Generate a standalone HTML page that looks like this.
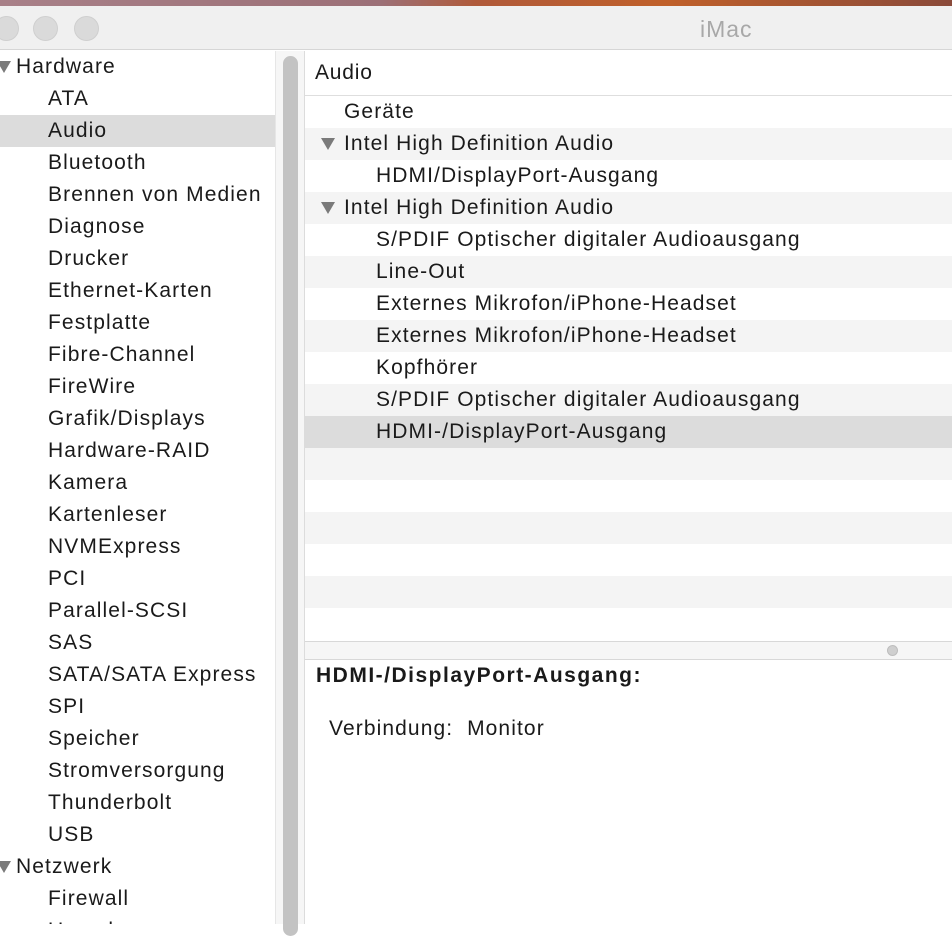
<!DOCTYPE html>
<html><head><meta charset="utf-8"><style>
*{margin:0;padding:0;box-sizing:border-box}
body{width:952px;height:924px;overflow:hidden;background:#fff;font-family:"Liberation Sans",sans-serif;color:#1a1a1a;position:relative}
.top{position:absolute;left:0;top:0;width:952px;height:6px;background:linear-gradient(90deg,#a88088 0%,#9c7077 40%,#b05a3a 50%,#c0602a 70%,#8a4a3a 100%)}
.title{position:absolute;left:0;top:6px;width:952px;height:44px;background:#f0f0f0;border-bottom:1px solid #d6d6d6}
.btn{position:absolute;top:10px;width:25px;height:25px;border-radius:50%;background:#dadada;border:1px solid #cfcfcf}
.ttl{position:absolute;left:700px;top:10px;font-size:23px;color:#a8a8a8;letter-spacing:1px}
.side{position:absolute;left:0;top:51px;width:275px;height:873px;background:#fff;overflow:hidden}
.row{height:32px;line-height:32px;font-size:21px;white-space:nowrap;position:relative;letter-spacing:1.1px}
.side .row{padding-left:48px}
.side .row.h{padding-left:16px}
.sel{background:#dcdcdc}
.tri{position:absolute;width:0;height:0;border-left:7px solid transparent;border-right:7px solid transparent;border-top:12px solid #7a7a7a}
.track{position:absolute;left:275px;top:51px;width:30px;height:873px;background:#f6f6f6;border-left:1px solid #e6e6e6;border-right:1px solid #dcdcdc}
.thumb{position:absolute;left:283px;top:56px;width:15px;height:880px;border-radius:8px;background:#c3c3c3}
.main{position:absolute;left:305px;top:51px;width:647px}
.hdr{height:45px;line-height:44px;padding-left:10px;font-size:21px;border-bottom:1px solid #dedede;letter-spacing:0.8px}
.main .row{padding-left:39px}
.main .row.c{padding-left:71px}
.main .row:nth-child(even){background:#f4f4f4}
.main .row.sel{background:#dcdcdc}
.split{position:absolute;left:305px;top:641px;width:647px;height:19px;background:#f6f6f6;border-top:1px solid #d8d8d8;border-bottom:1px solid #d8d8d8}
.dot{position:absolute;left:582px;top:3px;width:11px;height:11px;border-radius:50%;background:#cfcfcf;border:1px solid #bdbdbd}
</style></head><body>
<div class="top"></div>
<div class="title">
<div class="btn" style="left:-6px"></div><div class="btn" style="left:33px"></div><div class="btn" style="left:74px"></div>
<div class="ttl">iMac</div>
</div>
<div class="side">
<div class="row h"><span class="tri" style="left:-3px;top:10px"></span>Hardware</div>
<div class="row">ATA</div>
<div class="row sel">Audio</div>
<div class="row">Bluetooth</div>
<div class="row">Brennen von Medien</div>
<div class="row">Diagnose</div>
<div class="row">Drucker</div>
<div class="row">Ethernet-Karten</div>
<div class="row">Festplatte</div>
<div class="row">Fibre-Channel</div>
<div class="row">FireWire</div>
<div class="row">Grafik/Displays</div>
<div class="row">Hardware-RAID</div>
<div class="row">Kamera</div>
<div class="row">Kartenleser</div>
<div class="row">NVMExpress</div>
<div class="row">PCI</div>
<div class="row">Parallel-SCSI</div>
<div class="row">SAS</div>
<div class="row">SATA/SATA Express</div>
<div class="row">SPI</div>
<div class="row">Speicher</div>
<div class="row">Stromversorgung</div>
<div class="row">Thunderbolt</div>
<div class="row">USB</div>
<div class="row h"><span class="tri" style="left:-3px;top:10px"></span>Netzwerk</div>
<div class="row">Firewall</div>
<div class="row">Umgebungen</div>
</div>
<div class="track"></div><div class="thumb"></div>
<div class="main">
<div class="hdr">Audio</div>
<div>
<div class="row">Geräte</div>
<div class="row"><span class="tri" style="left:16px;top:10px"></span>Intel High Definition Audio</div>
<div class="row c">HDMI/DisplayPort-Ausgang</div>
<div class="row"><span class="tri" style="left:16px;top:10px"></span>Intel High Definition Audio</div>
<div class="row c">S/PDIF Optischer digitaler Audioausgang</div>
<div class="row c">Line-Out</div>
<div class="row c">Externes Mikrofon/iPhone-Headset</div>
<div class="row c">Externes Mikrofon/iPhone-Headset</div>
<div class="row c">Kopfhörer</div>
<div class="row c">S/PDIF Optischer digitaler Audioausgang</div>
<div class="row c sel">HDMI-/DisplayPort-Ausgang</div>
<div class="row"></div><div class="row"></div><div class="row"></div><div class="row"></div><div class="row"></div><div class="row" style="height:17px"></div>
</div>
</div>
<div class="split"><div class="dot"></div></div>
<div style="position:absolute;left:316px;top:664px;font-size:21px;font-weight:bold;letter-spacing:1.5px">HDMI-/DisplayPort-Ausgang:</div>
<div style="position:absolute;left:329px;top:717px;font-size:21px;letter-spacing:1.1px">Verbindung:&nbsp;&nbsp;Monitor</div>
</body></html>
